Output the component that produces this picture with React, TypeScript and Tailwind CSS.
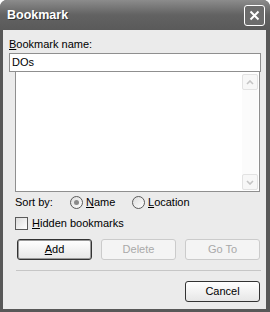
const font = { fontFamily: '"Liberation Sans", Arial, sans-serif' }

function ScrollArrow({ up }: { up?: boolean }) {
  return (
    <div className="w-[16px] h-[16px] rounded-[2px] border border-[#e2e2e2] bg-[#f7f7f7] flex items-center justify-center">
      <svg width="8" height="5" viewBox="0 0 8 5">
        <path d={up ? 'M1 4 L4 1 L7 4' : 'M1 1 L4 4 L7 1'} fill="none" stroke="#c4c4c4" strokeWidth="1.6" />
      </svg>
    </div>
  )
}

function Radio({ checked }: { checked?: boolean }) {
  return (
    <span className="w-[13px] h-[13px] rounded-full border border-[#5a5a5a] bg-gradient-to-br from-[#dcdcdc] to-white flex items-center justify-center shrink-0">
      {checked && <span className="w-[5px] h-[5px] rounded-full bg-[#8a8a8a]" />}
    </span>
  )
}

function Btn({ label, u, disabled, def }: { label: string; u?: boolean; disabled?: boolean; def?: boolean }) {
  const cls = disabled
    ? 'border-[#cbcbcb] text-[#a9a9a9] bg-[#f4f4f4]'
    : def
      ? 'border-[#333] text-black bg-gradient-to-b from-white to-[#e6e6e6] shadow-[inset_0_0_0_1px_#9a9a9a]'
      : 'border-[#333] text-black bg-gradient-to-b from-white to-[#e6e6e6]'
  return (
    <div className={`w-[75px] h-[21px] rounded-[3px] border flex items-center justify-center text-[11px] ${cls}`}>
      {u ? <span><span className="underline">{label[0]}</span>{label.slice(1)}</span> : label}
    </div>
  )
}

export default function App() {
  return (
    <div style={font} className="w-[270px] h-[312px] bg-[#585858] rounded-t-[7px] flex flex-col overflow-hidden">
      {/* title bar */}
      <div className="h-[30px] shrink-0 flex items-center justify-between pl-[7px] pr-[5px] bg-gradient-to-b from-[#8c8c8c] via-[#626262] to-[#5a5a5a]">
        <span className="text-white font-bold text-[12.5px] [text-shadow:1px_1px_0_#333]">Bookmark</span>
        <div className="w-[21px] h-[21px] rounded-[3px] border border-white bg-[#6c6c6c] flex items-center justify-center">
          <svg width="11" height="11" viewBox="0 0 11 11">
            <path d="M1.5 1.5 L9.5 9.5 M9.5 1.5 L1.5 9.5" stroke="white" strokeWidth="2" />
          </svg>
        </div>
      </div>

      {/* client area */}
      <div className="flex-1 ml-[3px] mr-[4px] mb-[3px] bg-[#ebebeb] flex flex-col pt-[8px] text-[11px] leading-[13px] text-black">
        <div className="ml-[6px]"><span className="underline">B</span>ookmark name:</div>
        <div className="ml-[6px] mt-[2px] w-[252px] h-[19px] border border-[#8f8f8f] bg-white flex items-center pl-[2px] relative z-10">DOs</div>
        <div className="ml-[12px] -mt-[1px] w-[245px] h-[121px] border border-[#8f8f8f] bg-white flex justify-end pt-[2px] pb-[1px] pr-[1px]">
          <div className="w-[16px] flex flex-col justify-between bg-[#fbfbfb]">
            <ScrollArrow up />
            <ScrollArrow />
          </div>
        </div>

        <div className="ml-[12px] mt-[4px] flex items-center h-[13px]">
          <span className="w-[55px]">Sort by:</span>
          <Radio checked />
          <span className="ml-[3px] w-[46px]"><span className="underline">N</span>ame</span>
          <Radio />
          <span className="ml-[3px]"><span className="underline">L</span>ocation</span>
        </div>

        <div className="ml-[12px] mt-[8px] flex items-center h-[13px]">
          <span className="w-[13px] h-[13px] border border-[#5a5a5a] bg-gradient-to-br from-[#dcdcdc] to-white shrink-0" />
          <span className="ml-[4px]"><span className="underline">H</span>idden bookmarks</span>
        </div>

        <div className="ml-[14px] mt-[9px] flex gap-[9px]">
          <Btn label="Add" u def />
          <Btn label="Delete" disabled />
          <Btn label="Go To" disabled />
        </div>

        <div className="ml-[13px] mt-[10px] w-[245px] h-[1px] bg-[#c6c6c6]" />

        <div className="mt-[10px] mr-[6px] flex justify-end">
          <Btn label="Cancel" />
        </div>
      </div>
    </div>
  )
}
